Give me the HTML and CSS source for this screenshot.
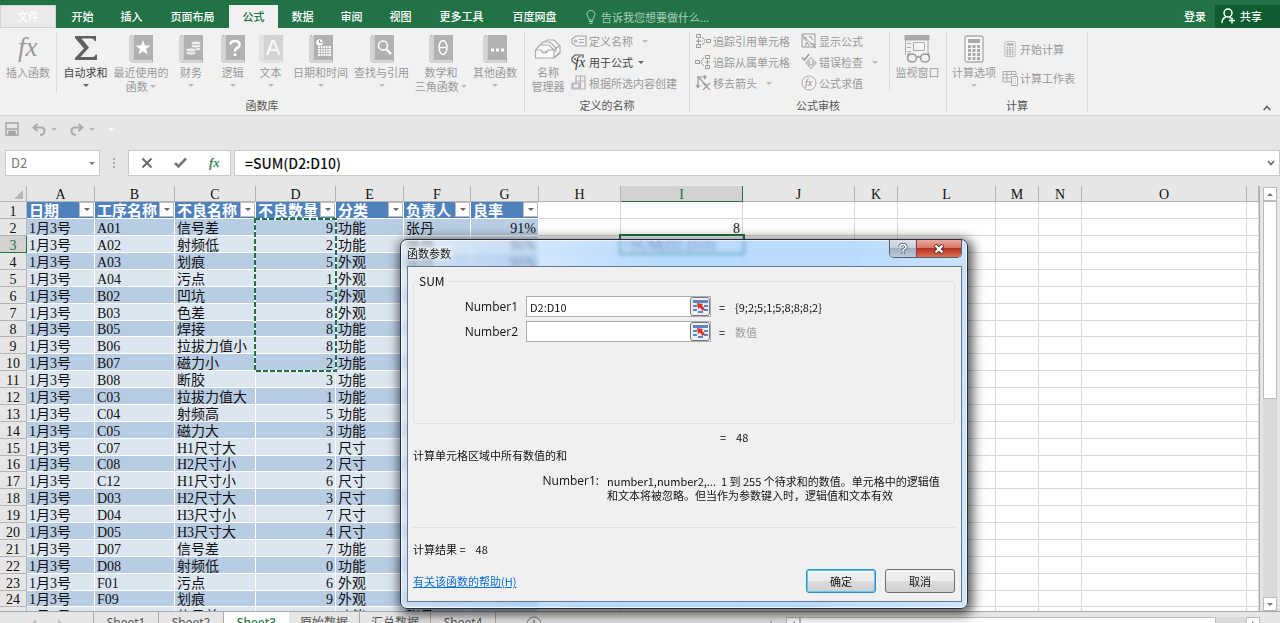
FILE: index.html
```html
<!DOCTYPE html>
<html lang="zh-CN">
<head>
<meta charset="utf-8">
<title>Excel - 函数参数</title>
<link rel="stylesheet" href="styles.css">
</head>
<body>
<svg class="defs" aria-hidden="true">
  <symbol id="book" viewBox="0 0 24 28">
    <path d="M1 2.5Q1 .5 3 .5V25H23.500V27H3Q1 27 1 25Z" fill="#fafafa" stroke="#b3b0b3"/>
    <path d="M4.500 0H24V25H4.500Z" fill="#b3b0b3"/>
  </symbol>
  <symbol id="calc" viewBox="0 0 20 28">
    <rect x="1" y="1" width="18" height="26" rx="2" fill="#f8f8f8" stroke="#aaa" stroke-width="1.300"/>
    <path d="M4 4h12v4H4z" fill="#aaa"/>
    <path d="M4 11.500h12M4 15.500h12M4 19.500h12M4 23.500h12" stroke="#aaa" stroke-width="3" stroke-dasharray="3 1.500"/>
  </symbol>
</svg>

<header class="titlebar">
  <nav class="tabs">
    <button class="tab file">文件</button>
    <button class="tab">开始</button>
    <button class="tab">插入</button>
    <button class="tab wide">页面布局</button>
    <button class="tab active">公式</button>
    <button class="tab">数据</button>
    <button class="tab">审阅</button>
    <button class="tab">视图</button>
    <button class="tab wide">更多工具</button>
    <button class="tab wide">百度网盘</button>
  </nav>
  <button class="tell">
    <svg width="10" height="14" viewBox="0 0 10 14" fill="none" stroke="#a9cdb8"><path d="M3 10Q3 8.500 2 7A4 4 0 1 1 8 7Q7 8.500 7 10ZM3 11.500H7M3.500 13.300H6.500"/></svg>
    <span>告诉我您想要做什么...</span>
  </button>
  <button class="login">登录</button>
  <button class="share">
    <svg width="15" height="16" viewBox="0 0 15 16" fill="none" stroke="#fff" stroke-width="1.500"><circle cx="7" cy="5" r="4"/><path d="M1 15Q1 10 5 9M8.500 9L10 10.500M8 12.500H14M11 9.500V15.500"/></svg>
    <span>共享</span>
  </button>
</header>

<section class="ribbon">
  <div class="group">
    <div class="library">
      <button class="big first"><svg width="28" height="28" viewBox="0 0 28 28"><text x="4" y="21" class="fx-big">fx</text></svg><span>插入函数</span></button>
      <button class="big on"><svg width="24" height="28" viewBox="0 0 24 28"><path d="M1 1H22V6H20.500Q20 3.500 17 3.500H7.500L15 12.500L6.500 22H18Q21 22 21.500 19.500H23V25H1V23L10 13.500L1 3Z" fill="#606060"/></svg><span>自动求和</span><i class="arrow"></i></button>
      <button class="big"><svg width="24" height="28" viewBox="0 0 24 28"><use href="#book"/><path d="M14 5L16 10.500H21.500L17 14L18.700 19.500L14 16.200L9.300 19.500L11 14L6.500 10.500H12Z" fill="#fff"/></svg><span>最近使用的<br>函数 <i class="arrow"></i></span></button>
      <button class="big"><svg width="24" height="28" viewBox="0 0 24 28"><use href="#book"/><g fill="#ededed" stroke="#b3b0b3" stroke-width=".8"><ellipse cx="17" cy="14" rx="5" ry="2"/><ellipse cx="17" cy="11" rx="5" ry="2"/><ellipse cx="17" cy="8" rx="5" ry="2"/><ellipse cx="12" cy="18" rx="5" ry="2"/><ellipse cx="12" cy="15" rx="5" ry="2"/></g></svg><span>财务</span><i class="arrow"></i></button>
      <button class="big"><svg width="24" height="28" viewBox="0 0 24 28"><use href="#book"/><path d="M9.500 9.500Q9.500 6 14 6T18.500 9.500Q18.500 12 16 13Q14 14 14 16.500M14 18.500V21" fill="none" stroke="#fff" stroke-width="2.600"/></svg><span>逻辑</span><i class="arrow"></i></button>
      <button class="big"><svg class="faint" width="24" height="28" viewBox="0 0 24 28"><use href="#book"/><path d="M8 20L13.500 6H15L20.500 20M10 15H18.500" fill="none" stroke="#fff" stroke-width="2.400"/></svg><span>文本</span><i class="arrow"></i></button>
      <button class="big"><svg width="24" height="28" viewBox="0 0 24 28"><use href="#book"/><path d="M9 11H22V21H9Z" fill="#fff"/><path d="M9 13.500H22M9 16H22M9 18.500H22M11.500 11V21M14 11V21M16.500 11V21M19 11V21" stroke="#b3b0b3" stroke-width=".8"/><circle cx="10.500" cy="7.500" r="3.800" fill="#fff" stroke="#b3b0b3"/><path d="M10.500 5V7.500H13" fill="none" stroke="#999"/></svg><span>日期和时间</span><i class="arrow"></i></button>
      <button class="big"><svg width="24" height="28" viewBox="0 0 24 28"><use href="#book"/><g fill="none" stroke="#fff"><circle cx="13" cy="10.500" r="4.500" stroke-width="1.500"/><path d="M16 14L21 19" stroke-width="2.400"/></g></svg><span>查找与引用</span><i class="arrow"></i></button>
      <button class="big"><svg width="24" height="28" viewBox="0 0 24 28"><use href="#book"/><g fill="none" stroke="#fff" stroke-width="1.500"><ellipse cx="14" cy="12.500" rx="4" ry="7"/><path d="M11 12.500H17"/></g></svg><span>数学和<br>三角函数 <i class="arrow"></i></span></button>
      <button class="big"><svg width="24" height="28" viewBox="0 0 24 28"><use href="#book"/><path d="M8 13.500h3v3H8zM13 13.500h3v3h-3zM18 13.500h3v3h-3z" fill="#fff"/></svg><span>其他函数</span><i class="arrow"></i></button>
    </div>
    <div class="group-name">函数库</div>
  </div>

  <div class="group">
    <div class="group-body names">
      <button class="big"><svg width="28" height="28" viewBox="0 0 28 28" fill="#fafafa" stroke="#aaa" stroke-width="1.200"><path d="M8 14V9L13 5H20L26 11V18L21 22Z"/><path d="M5 15V11L9 7H16L22 13V17"/><path d="M1.500 15L6 10H15L20 15V23H1.500ZM20 15L25 11M20 23L26 17M1.500 15H7Q8 18 10.500 18T14 15H20"/></svg><span>名称<br>管理器</span></button>
      <div class="stack">
        <button class="small"><svg width="16" height="16" viewBox="0 0 16 16" fill="none" stroke="#aaa" stroke-width="1.200"><path d="M5 3H15V13H5L1 10V6Z"/><circle cx="4.500" cy="8" r="1"/><path d="M8 6.500H13M8 9.500H13"/></svg>定义名称<i class="arrow far"></i></button>
        <button class="small on"><svg width="16" height="16" viewBox="0 0 16 16"><path d="M5 10L1 7V4L4 1H12V4" fill="none" stroke="#555" stroke-width="1.200"/><circle cx="4" cy="5" r="1" fill="#555"/><text x="4" y="13" class="fx-mid">fx</text></svg>用于公式<i class="arrow"></i></button>
        <button class="small"><svg width="16" height="16" viewBox="0 0 16 16" fill="none" stroke="#b5b0b5" stroke-width="1.200"><path d="M5 1H14V14H5ZM5 6H14M9.500 1V14M1 8H9V14H1Z"/><path d="M2 9h6v4H2z" fill="#f4edf4"/></svg>根据所选内容创建</button>
      </div>
    </div>
    <div class="group-name">定义的名称</div>
  </div>

  <div class="group">
    <div class="group-body audit">
      <div class="stack">
        <button class="small"><svg width="16" height="16" viewBox="0 0 16 16" fill="none" stroke="#999"><path d="M1.500 1.500h4v3h-4zM1.500 11.500h4v3h-4zM11.500 6.500h4v3h-4zM1 8H6M3.500 5.500V10.500M7 4L10 7M7 12L10 9"/><path d="M7 8H10" stroke-dasharray="1 1"/></svg>追踪引用单元格</button>
        <button class="small"><svg width="16" height="16" viewBox="0 0 16 16" fill="none" stroke="#999"><path d="M.500 6.500h4v3h-4zM10.500 1.500h4v3h-4zM10.500 11.500h4v3h-4zM10 8H15M12.500 5.500V10.500M6 7L9 4M6 9L9 12"/><path d="M5 8H9" stroke-dasharray="1 1"/></svg>追踪从属单元格</button>
        <button class="small"><svg width="16" height="16" viewBox="0 0 16 16" fill="none" stroke="#999" stroke-width="1.200"><path d="M3 1V12M1 10L3 12.500L5 10M3 2L12 11M3 2H11M9 0L11 2L9 4M8 8L15 15M15 8L8 15"/></svg>移去箭头<i class="arrow far"></i></button>
      </div>
      <div class="stack">
        <button class="small"><svg width="16" height="16" viewBox="0 0 16 16" fill="none" stroke="#999"><path d="M1 1H14V14H1ZM1 2L15 15M3 3V7M5 4V8M8 3L12 7M4 13L6 9L8 13M9 11H13V15M10 3V5"/></svg>显示公式</button>
        <button class="small"><svg width="16" height="16" viewBox="0 0 16 16"><path d="M10 2.500L16 9L10 15.500L4 9Z" fill="#c5c2c5"/><path d="M10 5V10M10 11.500V13" stroke="#fff" stroke-width="1.500"/><path d="M1 3.500L3.500 6L8 0" fill="none" stroke="#999" stroke-width="1.500"/></svg>错误检查<i class="arrow far"></i></button>
        <button class="small"><svg width="16" height="16" viewBox="0 0 16 16"><circle cx="8" cy="8" r="7" fill="#f6f2f6" stroke="#aaa"/><text x="4" y="11" class="fx-small">fx</text></svg>公式求值</button>
      </div>
      <button class="big watch"><svg width="28" height="28" viewBox="0 0 28 28" fill="none" stroke="#aaa"><path d="M1.500 1H24V18" fill="#f8f4f8"/><path d="M1.500 1V20M3 8.500H7M3 12.500H7M3 16.500H7"/><path d="M1 0H25V5H1Z" fill="#aaa"/><path d="M9.500 7.500H20.500V15.500H9.500Z"/><g stroke="#999" stroke-width="1.500"><ellipse cx="8" cy="23" rx="4.500" ry="4"/><ellipse cx="21" cy="23" rx="4.500" ry="4"/><path d="M12.500 22H16.500M3.500 22L5 18M25.500 22L24 18"/></g></svg><span>监视窗口</span></button>
    </div>
    <div class="group-name">公式审核</div>
  </div>

  <div class="group">
    <div class="group-body compute">
      <button class="big"><svg width="20" height="28"><use href="#calc"/></svg><span>计算选项</span><i class="arrow"></i></button>
      <div class="stack two">
        <button class="small"><svg width="16" height="16"><use href="#calc"/></svg>开始计算</button>
        <button class="small"><svg width="16" height="16" viewBox="0 0 16 16" fill="none" stroke="#aaa"><path d="M1 1.500H14V12H1ZM1 4.500H14M1 8H9M5 1V12M9.500 1V5"/><path d="M9.500 6.500h6v9h-6z" fill="#fafafa"/><path d="M11 8.500H14M11 11H14M11 13H14" stroke-dasharray="1 1"/></svg>计算工作表</button>
      </div>
    </div>
    <div class="group-name">计算</div>
  </div>
  <button class="collapse" aria-label="折叠功能区"><svg width="8" height="6" viewBox="0 0 8 6" fill="none" stroke="#666" stroke-width="1.800"><path d="M.700 5L4 1.500L7.300 5"/></svg></button>
</section>

<div class="quick">
  <button aria-label="保存"><svg width="14" height="14" viewBox="0 0 14 14" fill="none" stroke="#a5a2a5" stroke-width="1.500"><path d="M1 1H13V13H1ZM1 7H13"/><path d="M4 9.500H10V13H4Z" fill="#a5a2a5"/></svg></button>
  <button aria-label="撤消"><svg width="14" height="13" viewBox="0 0 14 13" fill="none" stroke="#aaa" stroke-width="2"><path d="M5.500 1L1.500 4.500L5.500 8M2 4.500H9Q12.500 4.500 12.500 8T8 12"/></svg><i class="arrow"></i></button>
  <button aria-label="恢复"><svg width="14" height="13" viewBox="0 0 14 13" fill="none" stroke="#aaa" stroke-width="2"><path d="M8.500 1L12.500 4.500L8.500 8M12 4.500H5Q1.500 4.500 1.500 8T6 12"/></svg><i class="arrow"></i></button>
  <button aria-label="自定义"><i class="arrow pale"></i></button>
</div>

<div class="formula-bar">
  <div class="name-box"><input type="text" value="D2" aria-label="名称框"><i class="arrow"></i></div>
  <span class="dots"></span>
  <div class="formula-tools">
    <button aria-label="取消输入"><svg width="12" height="12" viewBox="0 0 12 12" stroke="#666" stroke-width="1.800"><path d="M1.500 1.500L10.500 10.500M10.500 1.500L1.500 10.500"/></svg></button>
    <button aria-label="输入"><svg width="13" height="12" viewBox="0 0 13 12" fill="none" stroke="#777" stroke-width="2.600"><path d="M1 6L4.500 9.500L12 1.500"/></svg></button>
    <button aria-label="插入函数"><svg width="12" height="14" viewBox="0 0 12 14"><text x="1" y="11" class="fx-green">fx</text></svg></button>
  </div>
  <div class="formula-box"><input type="text" value="=SUM(D2:D10)" aria-label="编辑栏"><svg width="8" height="6" viewBox="0 0 8 6" fill="none" stroke="#666" stroke-width="1.500"><path d="M1 1L4 4.500L7 1"/></svg></div>
</div>

<main class="workspace">
  <div class="sheet">
    <table class="grid">
      <colgroup>
        <col class="w27"><col class="w68"><col class="w80"><col class="w81"><col class="w80"><col class="w68"><col class="w67"><col class="w68"><col class="w82"><col class="w122"><col class="w112"><col class="w43"><col class="w98"><col class="w43"><col class="w43"><col class="w165"><col>
      </colgroup>
      <thead id="letters"></thead>
      <tbody id="cells"></tbody>
    </table>
    <svg class="ants" width="83" height="154" fill="none" stroke-width="2"><rect x="1" y="1" width="81" height="152" stroke="#fff"/><rect x="1" y="1" width="81" height="152" stroke="#217346" stroke-dasharray="5 2"/></svg>
  </div>
  <div class="vscroll"><button aria-label="向上"><i class="arrow up"></i></button><div class="vtrack"><div class="vthumb"></div></div><button aria-label="向下"><i class="arrow"></i></button></div>
</main>

<footer class="sheetbar">
  <div class="sheet-nav"><i></i><i></i></div>
  <button class="sheet-tab">Sheet1</button>
  <button class="sheet-tab">Sheet2</button>
  <button class="sheet-tab current">Sheet3</button>
  <button class="sheet-tab cn">原始数据</button>
  <button class="sheet-tab cn">汇总数据</button>
  <button class="sheet-tab">Sheet4</button>
  <button class="add" aria-label="新工作表"><svg width="16" height="16" viewBox="0 0 16 16" fill="none" stroke="#777"><circle cx="8" cy="8" r="7"/><path d="M8 4V12M4 8H12" stroke-width="1.500"/></svg></button>
  <span class="grip"></span>
  <div class="hscroll"><button aria-label="向左"><i class="arrow left"></i></button><div class="hthumb"></div><div class="htrack"></div><button aria-label="向右"><i class="arrow right"></i></button></div>
</footer>

<div class="dialog" role="dialog" aria-labelledby="dlg-title">
  <div class="dialog-title">
    <span id="dlg-title">函数参数</span>
    <div class="window-buttons">
      <button class="help" aria-label="帮助"><svg width="12" height="12" viewBox="0 0 12 12" fill="none"><path d="M3 4Q3 1.500 6 1.500T9 4Q9 5.500 7.500 6Q6 6.500 6 8M6 9V11" stroke="#4d5868" stroke-width="3.200"/><path d="M3 4Q3 1.500 6 1.500T9 4Q9 5.500 7.500 6Q6 6.500 6 8M6 9.300V10.700" stroke="#fff" stroke-width="1.600"/></svg></button>
      <button class="close" aria-label="关闭"><svg width="12" height="10" viewBox="0 0 12 10"><path d="M2 1L10 9M10 1L2 9" stroke="#5b2a2a" stroke-width="4.200"/><path d="M2.500 1.500L9.500 8.500M9.500 1.500L2.500 8.500" stroke="#fff" stroke-width="2.400"/></svg></button>
    </div>
  </div>
  <form class="client">
    <fieldset>
      <legend>SUM</legend>
      <div class="arg">
        <label for="n1">Number1</label>
        <div class="ref"><input id="n1" type="text" value="D2:D10"><button type="button" aria-label="选择区域"><svg width="15" height="13" viewBox="0 0 15 13"><path d="M0 0H15V13H0Z" fill="#e9f0fb"/><path d="M0 0H15V3H0ZM0 5h4v2H0zM0 9h4v2H0zM11 5h4v2h-4zM11 9h4v2h-4zM5 11h5v2H5z" fill="#5f83c2"/><path d="M4 3L10 4L9 5.500L12 9L9.500 11L7 7.500L5 9Z" fill="#d8352a"/></svg></button></div>
        <span>=</span><output>{9;2;5;1;5;8;8;8;2}</output>
      </div>
      <div class="arg">
        <label for="n2">Number2</label>
        <div class="ref"><input id="n2" type="text"><button type="button" aria-label="选择区域"><svg width="15" height="13" viewBox="0 0 15 13"><path d="M0 0H15V13H0Z" fill="#e9f0fb"/><path d="M0 0H15V3H0ZM0 5h4v2H0zM0 9h4v2H0zM11 5h4v2h-4zM11 9h4v2h-4zM5 11h5v2H5z" fill="#5f83c2"/><path d="M4 3L10 4L9 5.500L12 9L9.500 11L7 7.500L5 9Z" fill="#d8352a"/></svg></button></div>
        <span>=</span><output class="hint">数值</output>
      </div>
    </fieldset>
    <div class="total"><span>=</span><span>48</span></div>
    <p class="summary">计算单元格区域中所有数值的和</p>
    <div class="arg-help"><span class="arg-name">Number1:</span><p>number1,number2,... &nbsp;1 到 255 个待求和的数值。单元格中的逻辑值<br>和文本将被忽略。但当作为参数键入时，逻辑值和文本有效</p></div>
    <div class="result"><span>计算结果 =</span><span>48</span></div>
    <div class="dialog-foot">
      <a href="#help">有关该函数的帮助(H)</a>
      <button type="button" class="push default">确定</button>
      <button type="button" class="push">取消</button>
    </div>
  </form>
</div>
<script src="script.js"></script>
</body>
</html>
```
FILE: styles.css
```css
* { box-sizing: border-box; }

body {
  margin: 0;
  height: 100vh;
  overflow: hidden;
  display: flex;
  flex-direction: column;
  position: relative;
  background: #e6e6e6;
  color: #444;
  font: 11px/14px "Noto Sans CJK SC", sans-serif;
}

button {
  font: inherit;
  color: inherit;
  background: none;
  border: 0;
  padding: 0;
  white-space: nowrap;
}

input { font: inherit; color: inherit; border: 0; min-width: 0; padding: 0; background: none; }
p { margin: 0; }
svg { display: block; flex: none; }
.defs { position: absolute; width: 0; height: 0; }

.arrow {
  display: inline-block;
  flex: none;
  border: 3px solid transparent;
  border-top-color: currentColor;
  border-bottom: 0;
}
.arrow.up { border-top: 0; border-bottom: 3px solid #777; }
.arrow.left { border: 3px solid transparent; border-left: 0; border-right-color: #777; }
.arrow.right { border: 3px solid transparent; border-right: 0; border-left-color: #777; }
.arrow.pale { color: #f8f8f8; }

/* Title bar */
.titlebar {
  display: flex;
  align-items: stretch;
  flex: none;
  height: 28px;
  padding-top: 5px;
  background: #217346;
  color: #fff;
}
.tabs { display: flex; }
.tab { width: 49px; padding-bottom: 2px; font-weight: 500; }
.tab.wide { width: 73px; }
.tab.file { width: 56px; margin-right: 2px; background: #e9e9e9; color: #fff; border: 1px solid #d0d0d0; }
.tab.active { background: #f1f1f1; color: #217346; }
.tell { display: flex; align-items: center; gap: 5px; margin: 0 auto 0 15px; color: #a9cdb8; }
.login { padding-bottom: 2px; margin-right: 9px; font-weight: 500; }
.share { display: flex; align-items: center; gap: 4px; width: 65px; padding: 0 0 2px 6px; background: #0f5c30; font-weight: 500; }

/* Ribbon */
.ribbon {
  display: flex;
  height: 88px;
  flex: none;
  background: #f1f1f1;
  border-bottom: 1px solid #d5d5d5;
  color: #999;
}
.group {
  display: flex;
  flex-direction: column;
  justify-content: space-between;
  margin: 4px 0 3px;
  border-right: 1px solid #d8d8d8;
}
.group-name { text-align: center; color: #555; line-height: 14px; height: 14px; }
.library {
  display: grid;
  grid-template-columns: 57px 57px 54px 46px 37px 39px 61px 61px 58px 50px;
  padding-right: 4px;
}
.big { display: flex; flex-direction: column; align-items: center; padding-top: 3px; text-align: center; }
.big span { padding-top: 2px; }
.big .arrow { color: #bbb; margin-top: 5px; }
.big span .arrow { margin: 0 0 3px; }
.big.on, .small.on { color: #444; }
.big.on .arrow, .small.on .arrow { color: #666; }
.big.first { border-right: 1px solid #ddd; }
.faint { opacity: .45; }
.fx-big { font: italic 27px "Liberation Serif", serif; fill: #999; }
.fx-mid { font: italic 14px "Liberation Serif", serif; fill: #333; }
.fx-small { font: italic 10px "Liberation Serif", serif; fill: #888; }
.fx-green { font: italic bold 13px "Liberation Serif", serif; fill: #3b8a5d; }
.group-body { display: flex; }
.names { width: 164px; }
.names .big { width: 46px; }
.stack { display: flex; flex-direction: column; gap: 5px; padding-top: 1px; }
.stack.two { gap: 13px; padding-top: 9px; }
.small { display: flex; align-items: center; gap: 2px; height: 16px; }
.small .arrow { margin-left: 3px; color: #bbb; }
.small .arrow.far { margin-left: 7px; }
.audit { width: 256px; padding-left: 5px; gap: 11px; }
.audit .watch { width: 56px; border-left: 1px solid #ddd; }
.audit .stack:nth-child(2) { width: 77px; }
.compute { width: 140px; gap: 1px; }
.compute .big { width: 54px; }
.collapse { margin: auto 9px 4px auto; }

/* Quick access toolbar */
.quick { display: flex; align-items: center; flex: none; height: 26px; padding-left: 5px; color: #b5b5b5; }
.quick button { display: flex; align-items: center; gap: 5px; margin-right: 13px; }

/* Formula bar */
.formula-bar { display: flex; align-items: stretch; flex: none; height: 34px; padding: 8px 0 0 5px; margin-bottom: 10px; }
.name-box, .formula-tools, .formula-box { display: flex; align-items: center; background: #fff; border: 1px solid #cacaca; }
.name-box { width: 95px; padding: 0 4px 0 5px; color: #777; font-size: 13px; }
.name-box input { flex: 1; }
.dots { width: 2px; margin: 8px 13px; border-left: 2px dotted #aaa; }
.formula-tools { width: 103px; justify-content: space-between; padding: 0 10px 0 12px; }
.formula-box { flex: 1; margin-left: 3px; padding: 0 4px 0 10px; color: #111; font-size: 14px; font-weight: 500; }
.formula-box input { flex: 1; }

/* Worksheet */
.workspace { display: flex; flex: 1; min-height: 0; }
.sheet { position: relative; flex: 1; min-width: 0; overflow: hidden; background: #fff; border-right: 1px solid #aaa; }
.grid { width: 100%; table-layout: fixed; border-collapse: separate; border-spacing: 0; color: #111; font: 14px/13px "Liberation Serif", "Noto Sans CJK SC", serif; }
.w27 { width: 27px; }
.w43 { width: 43px; }
.w67 { width: 67px; }
.w68 { width: 68px; }
.w80 { width: 80px; }
.w81 { width: 81px; }
.w82 { width: 82px; }
.w98 { width: 98px; }
.w112 { width: 112px; }
.w122 { width: 122px; }
.w165 { width: 165px; }
.grid th, .grid td { padding: 2px 2px 0; border: 0 solid #d9d9d9; border-width: 0 1px 1px 0; white-space: nowrap; overflow: hidden; text-align: left; }
.grid tbody tr { height: 17px; }
.grid tbody tr:nth-child(8n) { height: 16px; }
.grid thead th, .grid tbody th { background: #e6e6e6; border-color: #b5b5b5; font-weight: 400; text-align: center; padding: 2px 0 0; }
.grid thead th { height: 16px; }
.grid thead th.sel, .grid tbody th.sel { background: #d2d2d2; color: #217346; border-color: #217346; }
.grid .corner::after { content: ""; display: block; width: 0; margin: 0 3px 0 auto; border-left: 9px solid transparent; border-bottom: 9px solid #b5b5b5; }
.grid td.head { background: #4f81bd; color: #fff; font-size: 15px; line-height: 18px; font-weight: 700; border-color: #fff; padding: 0 0 0 2px; }
.head div { display: flex; height: 16px; justify-content: space-between; overflow: hidden; }
.filter { display: flex; align-items: center; justify-content: center; width: 15px; height: 15px; flex: none; background: #fff; border: 1px solid #bbb; color: #666; }
.grid td.dark { background: #b8cce4; border-color: #fff; }
.grid td.light { background: #dce6f1; border-color: #fff; }
.grid td.num { text-align: right; }
.grid td.active-cell { outline: 2px solid #217346; }
.ants { position: absolute; left: 254px; top: 32px; }

.vscroll { display: flex; flex-direction: column; width: 14px; margin: 1px 3px 0 3px; }
.vscroll button { display: flex; align-items: center; justify-content: center; height: 14px; background: #fff; border: 1px solid #bbb; color: #777; }
.vtrack { flex: 1; background: #dadada; }
.vthumb { height: 50%; background: #fff; border: 1px solid #bbb; }

/* Sheet tabs */
.sheetbar { display: flex; align-items: flex-start; flex: none; height: 12px; overflow: hidden; border-top: 1px solid #aaa; font: 12px/20px "Noto Sans", "Noto Sans CJK SC", sans-serif; color: #555; }
.sheet-nav { display: flex; width: 94px; height: 22px; align-items: center; justify-content: center; gap: 22px; border-right: 1px solid #aaa; }
.sheet-nav i { border: 4px solid transparent; border-right-color: #bbb; border-left: 0; }
.sheet-nav i + i { border-left: 4px solid #bbb; border-right: 0; }
.sheet-tab { width: 65px; height: 22px; border-right: 1px solid #aaa; }
.sheet-tab.cn { width: 71px; }
.sheet-tab.current { background: #fff; color: #217346; font-weight: 500; border: 0; }
.add { margin: 4px auto 0 30px; }
.grip { width: 2px; height: 2px; margin: 9px 14px 0 0; background: #aaa; }
.hscroll { display: flex; width: 37%; max-width: 477px; height: 14px; margin: 5px 20px 0 0; background: #dadada; }
.hscroll button { display: flex; align-items: center; justify-content: center; width: 14px; background: #fff; border: 1px solid #bbb; }
.hthumb { flex: 14; background: #fff; border: 1px solid #bbb; }
.htrack { flex: 1; }

/* Function arguments dialog */
.dialog {
  position: absolute;
  left: 400px;
  top: 239px;
  width: 568px;
  padding: 0 5px 6px 6px;
  border: 1px solid #26303c;
  border-radius: 7px;
  background: linear-gradient(100deg, rgba(225, 236, 248, .5), rgba(150, 201, 255, .66) 40%, rgba(150, 201, 255, .66) 70%, rgba(190, 222, 255, .72));
  backdrop-filter: blur(2px);
  box-shadow: inset 0 0 0 1px rgba(255, 255, 255, .7), 2px 3px 12px 3px rgba(0, 0, 0, .65);
  color: #111;
}
.dialog-title { display: flex; justify-content: space-between; height: 26px; line-height: 26px; text-shadow: 0 0 6px #fff, 0 0 6px #fff, 0 0 6px #fff; }
.window-buttons { display: flex; height: 18px; border: 1px solid #555f70; border-top: 0; border-radius: 0 0 5px 5px; overflow: hidden; }
.window-buttons button { display: flex; align-items: center; justify-content: center; }
.help { width: 26px; background: linear-gradient(#dbe3ec, #c3cedb 48%, #9fb0c4 50%, #bccbdc); }
.window-buttons .help { background: linear-gradient(#dbe3ec, #c3cedb 48%, #9fb0c4 50%, #bccbdc); }
.window-buttons .close { width: 45px; border-left: 1px solid #7b4044; background: linear-gradient(#eba79d, #d8766a 48%, #b53223 50%, #df7254); }
.client { padding: 6px 6px 8px 5px; background: #f0f0f0; border: 1px solid #66788c; }
fieldset { height: 151px; margin: 0; padding: 7px 0 0; border: 1px solid #d9e2ea; border-radius: 3px; min-width: 0; }
legend { margin-left: 2px; padding: 0 3px; line-height: 16px; font-size: 12px; }
.arg { display: grid; grid-template-columns: 104px 185px 8px 1fr; column-gap: 8px; align-items: center; height: 21px; margin-bottom: 4px; }
.arg label { text-align: right; font: 12px/16px "Open Sans", sans-serif; }
.ref { display: flex; height: 21px; border: 1px solid #abadb3; background: #fff; }
.ref input { flex: 1; padding-left: 3px; }
.ref button { display: flex; align-items: center; justify-content: center; width: 20px; background: #eee; border: 1px solid #777; border-radius: 3px; }
.hint { color: #999; }
.total { display: flex; gap: 10px; margin: 5px 0 2px 307px; line-height: 16px; }
.summary { line-height: 16px; }
.arg-help { display: flex; gap: 8px; height: 65px; padding-top: 11px; border-bottom: 1px solid #d9e2ea; }
.arg-name { flex: 0 0 186px; text-align: right; font: 12px/14px "Open Sans", sans-serif; }
.arg-help p { white-space: nowrap; }
.result { display: flex; gap: 10px; margin: 13px 0 12px; line-height: 16px; }
.dialog-foot { display: flex; align-items: center; gap: 9px; }
.dialog-foot a { margin-right: auto; color: #0c6fd0; text-decoration: underline; }
.push { width: 70px; height: 24px; border: 1px solid #707070; border-radius: 3px; background: linear-gradient(#f3f3f3, #ebebeb 50%, #dcdcdc 50%, #cfcfcf); }
.push.default { border-color: #2c8cc4; box-shadow: inset 0 0 0 1px #5ccbf0; }
```
FILE: script.js
```js
const letters = "ABCDEFGHIJKLMNO".split("");
const headers = ["日期", "工序名称", "不良名称", "不良数量", "分类", "负责人", "良率"];
const records = [
  ["A01", "信号差", 9, "功能"], ["A02", "射频低", 2, "功能"], ["A03", "划痕", 5, "外观"],
  ["A04", "污点", 1, "外观"], ["B02", "凹坑", 5, "外观"], ["B03", "色差", 8, "外观"],
  ["B05", "焊接", 8, "功能"], ["B06", "拉拔力值小", 8, "功能"], ["B07", "磁力小", 2, "功能"],
  ["B08", "断胶", 3, "功能"], ["C03", "拉拔力值大", 1, "功能"], ["C04", "射频高", 5, "功能"],
  ["C05", "磁力大", 3, "功能"], ["C07", "H1尺寸大", 1, "尺寸"], ["C08", "H2尺寸小", 2, "尺寸"],
  ["C12", "H1尺寸小", 6, "尺寸"], ["D03", "H2尺寸大", 3, "尺寸"], ["D04", "H3尺寸小", 7, "尺寸"],
  ["D05", "H3尺寸大", 4, "尺寸"], ["D07", "信号差", 7, "功能"], ["D08", "射频低", 0, "功能"],
  ["F01", "污点", 6, "外观"], ["F09", "划痕", 9, "外观"], ["F10", "信号差", 5, "功能"]
];

document.getElementById("letters").innerHTML =
  '<tr><th class="corner"></th>' +
  letters.map(l => `<th${l === "I" ? ' class="sel"' : ""}>${l}</th>`).join("") +
  "<th></th></tr>";

const blank = n => "<td></td>".repeat(n);
let html = "<tr><th>1</th>" +
  headers.map(h => `<td class="head"><div><span>${h}</span><span class="filter"><i class="arrow"></i></span></div></td>`).join("") +
  blank(9) + "</tr>";

records.forEach(([code, name, count, kind], i) => {
  const row = i + 2;
  const tone = i % 2 ? "light" : "dark";
  const covered = row > 4 && row < 25;
  const values = ["1月3号", code, name, count, kind, covered ? "" : "张丹", covered ? "" : "91%"];
  const cells = values.map((v, c) => `<td class="${tone}${c === 3 || c === 6 ? " num" : ""}">${v}</td>`).join("");
  let result = "<td></td>";
  if (row === 2) result = '<td class="num">8</td>';
  if (row === 3) result = '<td class="active-cell">=SUM(D2:D10)</td>';
  html += `<tr><th${row === 3 ? ' class="sel"' : ""}>${row}</th>${cells}<td></td>${result}${blank(7)}</tr>`;
});
document.getElementById("cells").innerHTML = html;
```
